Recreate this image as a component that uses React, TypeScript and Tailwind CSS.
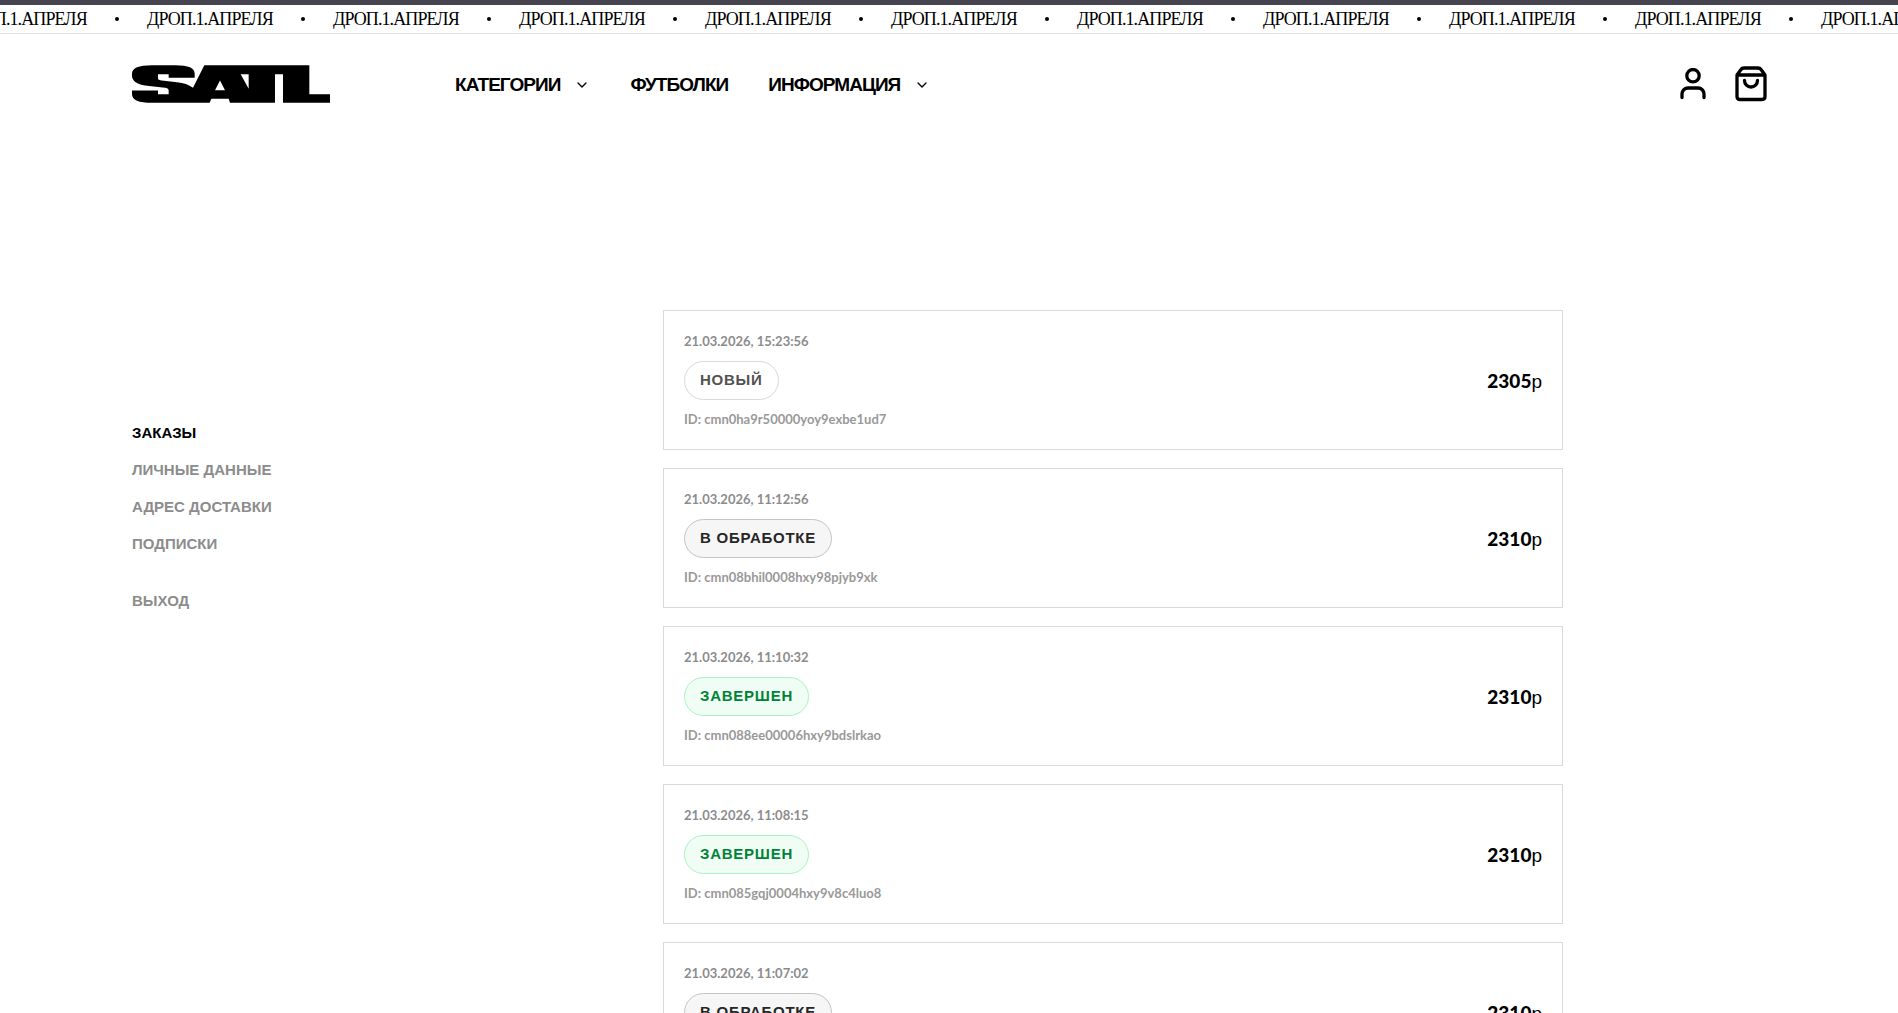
import { ChevronDown } from "lucide-react";

type Status = "new" | "processing" | "done";

interface Order {
  id?: string;
  date: string;
  status: Status;
  price: number;
}

const orders: Order[] = [
  { id: "cmn0ha9r50000yoy9exbe1ud7", date: "21.03.2026, 15:23:56", status: "new", price: 2305 },
  { id: "cmn08bhil0008hxy98pjyb9xk", date: "21.03.2026, 11:12:56", status: "processing", price: 2310 },
  { id: "cmn088ee00006hxy9bdslrkao", date: "21.03.2026, 11:10:32", status: "done", price: 2310 },
  { id: "cmn085gqj0004hxy9v8c4luo8", date: "21.03.2026, 11:08:15", status: "done", price: 2310 },
  { date: "21.03.2026, 11:07:02", status: "processing", price: 2310 },
];

const statusLabel: Record<Status, string> = {
  new: "НОВЫЙ",
  processing: "В ОБРАБОТКЕ",
  done: "ЗАВЕРШЕН",
};

const statusStyle: Record<Status, string> = {
  new: "border-[#d9d9d9] bg-white text-neutral-600",
  processing: "border-[#c4c4c4] bg-[#f6f6f6] text-neutral-800",
  done: "border-[#a7f3c3] bg-green-50 text-green-700",
};

function Marquee() {
  return (
    <div className="flex h-[29px] overflow-hidden border-b border-[#e2e2e2] bg-white">
      <div className="-ml-[39px] flex">
        {Array.from({ length: 11 }, (_, i) => (
          <div key={i} className="flex w-[186px] shrink-0 items-center justify-between pr-7">
            <span className="font-['Liberation_Serif',serif] text-lg leading-7 tracking-tighter whitespace-nowrap">
              ДРОП.1.АПРЕЛЯ
            </span>
            <span className="size-1 rounded-full bg-black" />
          </div>
        ))}
      </div>
    </div>
  );
}

function Logo() {
  return (
    <svg viewBox="0 0 594 113" className="h-[38px] w-[198px]" role="img" aria-label="SATL">
      <path
        fillRule="evenodd"
        d="M188 38H110V27H78V40C78 44 84 46 96 47L135 51C155 53 170 58 183 68L217 0H532V87H594V113H453V27H429V113H294L290 101H238L233 113H60C20 113 0 106 0 86V76H78V87H110V76C110 70 104 68 92 67L45 62C15 58 0 48 0 32V26C0 8 20 0 60 0H130C170 0 188 8 188 26ZM264 46 249 75H279ZM326 27 350 71V27Z"
      />
    </svg>
  );
}

function UserIcon() {
  return (
    <svg viewBox="0 0 32 32" className="size-8" fill="none" stroke="currentColor" strokeWidth="3.3" strokeLinecap="round" strokeLinejoin="round" aria-hidden="true">
      <circle cx="16" cy="7.700" r="6.200" />
      <path d="M5 29.500V26A6 6 0 0 1 11 20H21A6 6 0 0 1 27 26V29.500" />
    </svg>
  );
}

function BagIcon() {
  return (
    <svg viewBox="0 0 32 36" className="h-9 w-8" fill="none" stroke="currentColor" strokeWidth="3.3" strokeLinecap="round" strokeLinejoin="round" aria-hidden="true">
      <path d="M2 9 6 3.500Q7 2 9 2H23Q25 2 26 3.500L30 9V30.500Q30 33.500 27 33.500H5Q2 33.500 2 30.500ZM2 9H30" />
      <path d="M9.500 14.500A6.500 6.500 0 0 0 22.500 14.500" />
    </svg>
  );
}

function Header() {
  return (
    <header className="flex h-[100px] items-center pr-[131px] pl-[132px]">
      <a href="#home" className="mr-[125px]">
        <Logo />
      </a>
      <nav className="flex grow items-center gap-10 pt-[2px] text-[19px] font-bold tracking-tighter">
        <button type="button" className="flex items-center gap-[14px]">
          КАТЕГОРИИ
          <ChevronDown className="size-4" />
        </button>
        <a href="#tshirts">ФУТБОЛКИ</a>
        <button type="button" className="flex items-center gap-[14px]">
          ИНФОРМАЦИЯ
          <ChevronDown className="size-4" />
        </button>
      </nav>
      <div className="flex items-center gap-[26px]">
        <button type="button" aria-label="Профиль">
          <UserIcon />
        </button>
        <button type="button" aria-label="Корзина">
          <BagIcon />
        </button>
      </div>
    </header>
  );
}

function Sidebar() {
  return (
    <aside className="w-[531px] shrink-0 pt-[111px]">
      <nav className="flex flex-col items-start gap-[13px] text-[15px] leading-6 font-bold text-[#8c8c8c]">
        <a href="#orders" aria-current="page" className="text-black">
          ЗАКАЗЫ
        </a>
        <a href="#profile">ЛИЧНЫЕ ДАННЫЕ</a>
        <a href="#address">АДРЕС ДОСТАВКИ</a>
        <a href="#subscriptions">ПОДПИСКИ</a>
        <button type="button" className="mt-5">
          ВЫХОД
        </button>
      </nav>
    </aside>
  );
}

function OrderCard({ order }: { order: Order }) {
  return (
    <li className="flex min-h-[140px] items-center justify-between border border-[#d9d9d9] px-5 pt-5 pb-[19px]">
      <div className="flex flex-col items-start gap-[10px] self-start font-['Lato',sans-serif] font-bold">
        <time className="text-[13px] leading-5 text-[#8c8c8c]">{order.date}</time>
        <span
          className={`flex h-[39px] items-center rounded-full border px-[15px] font-['Liberation_Sans',sans-serif] text-[15px] tracking-wider ${statusStyle[order.status]}`}
        >
          {statusLabel[order.status]}
        </span>
        {order.id && <span className="text-[13px] leading-[18px] text-[#999999]">ID: {order.id}</span>}
      </div>
      <p className="flex items-baseline pt-[2px] font-['Lato',sans-serif] text-[19px] font-black">
        {order.price}
        <span className="font-['Liberation_Sans',sans-serif] font-normal">р</span>
      </p>
    </li>
  );
}

export default function App() {
  return (
    <div className="h-screen overflow-hidden border-t-[5px] border-[#45444f] bg-white font-['Liberation_Sans',sans-serif] text-black">
      <Marquee />
      <Header />
      <main className="flex px-[132px] pt-[176px]">
        <Sidebar />
        <ul className="flex max-w-[900px] grow flex-col gap-[18px]">
          {orders.map((order) => (
            <OrderCard key={order.date} order={order} />
          ))}
        </ul>
      </main>
    </div>
  );
}
